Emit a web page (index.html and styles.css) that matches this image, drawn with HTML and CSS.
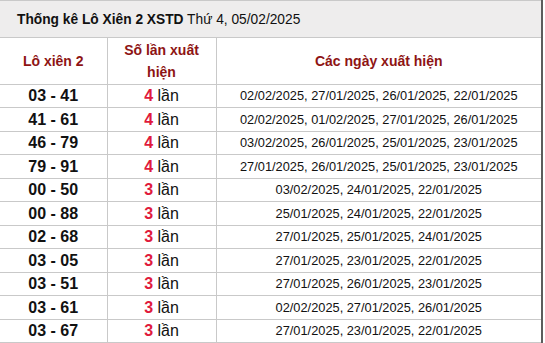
FILE: index.html
```html
<!DOCTYPE html>
<html lang="vi">
<head>
<meta charset="utf-8">
<title>Thống kê Lô Xiên 2 XSTD</title>
<link rel="stylesheet" href="styles.css">
</head>
<body>
<table class="stats">
  <colgroup>
    <col class="c1">
    <col class="c2">
    <col class="c3">
  </colgroup>
  <thead>
    <tr class="title-row">
      <th colspan="3" class="title"><b>Thống kê Lô Xiên 2 XSTD</b> Thứ 4, 05/02/2025</th>
    </tr>
    <tr class="head-row">
      <th>Lô xiên 2</th>
      <th>Số lần xuất hiện</th>
      <th>Các ngày xuất hiện</th>
    </tr>
  </thead>
  <tbody>
    <tr><td class="pair">03 - 41</td><td class="count"><b>4</b> lần</td><td class="dates">02/02/2025, 27/01/2025, 26/01/2025, 22/01/2025</td></tr>
    <tr><td class="pair">41 - 61</td><td class="count"><b>4</b> lần</td><td class="dates">02/02/2025, 01/02/2025, 27/01/2025, 26/01/2025</td></tr>
    <tr><td class="pair">46 - 79</td><td class="count"><b>4</b> lần</td><td class="dates">03/02/2025, 26/01/2025, 25/01/2025, 23/01/2025</td></tr>
    <tr><td class="pair">79 - 91</td><td class="count"><b>4</b> lần</td><td class="dates">27/01/2025, 26/01/2025, 25/01/2025, 23/01/2025</td></tr>
    <tr><td class="pair">00 - 50</td><td class="count"><b>3</b> lần</td><td class="dates">03/02/2025, 24/01/2025, 22/01/2025</td></tr>
    <tr><td class="pair">00 - 88</td><td class="count"><b>3</b> lần</td><td class="dates">25/01/2025, 24/01/2025, 22/01/2025</td></tr>
    <tr><td class="pair">02 - 68</td><td class="count"><b>3</b> lần</td><td class="dates">27/01/2025, 25/01/2025, 24/01/2025</td></tr>
    <tr><td class="pair">03 - 05</td><td class="count"><b>3</b> lần</td><td class="dates">27/01/2025, 23/01/2025, 22/01/2025</td></tr>
    <tr><td class="pair">03 - 51</td><td class="count"><b>3</b> lần</td><td class="dates">27/01/2025, 26/01/2025, 23/01/2025</td></tr>
    <tr><td class="pair">03 - 61</td><td class="count"><b>3</b> lần</td><td class="dates">02/02/2025, 27/01/2025, 26/01/2025</td></tr>
    <tr><td class="pair">03 - 67</td><td class="count"><b>3</b> lần</td><td class="dates">27/01/2025, 23/01/2025, 22/01/2025</td></tr>
  </tbody>
</table>
</body>
</html>
```
FILE: styles.css
```css
html, body {
  margin: 0;
  padding: 0;
  background: #ffffff;
}

body {
  font-family: "Liberation Sans", Arial, sans-serif;
  color: #111111;
}

.stats {
  border-collapse: collapse;
  width: 542px;
  table-layout: fixed;
  border-top: 1px solid #c8c8c8;
  border-right: 2px solid #5c5c5c;
}

.c1 { width: 107px; }
.c2 { width: 109px; }
.c3 { width: 326px; }

.stats th,
.stats td {
  border: 1px solid #c9c9c9;
  padding: 0;
  text-align: center;
}

.stats tr > :first-child {
  border-left: none;
}

.stats .title {
  background: #eeeded;
  text-align: left;
  padding: 0 0 0 17px;
  height: 36px;
  font-size: 13.75px;
  font-weight: normal;
  color: #111111;
  border-right: none;
}

.stats .title b {
  font-weight: bold;
}

.head-row th {
  height: 46px;
  font-size: 14px;
  line-height: 22px;
  font-weight: bold;
  color: #8e1414;
  padding: 0 14px;
}

.head-row th:last-child {
  border-right: none;
}

.stats tbody td {
  height: 22px;
  line-height: 20px;
}

.stats tbody tr:nth-child(even) td {
  height: 23px;
}

.stats tbody td:last-child {
  border-right: none;
}

.pair {
  font-size: 16px;
  font-weight: bold;
  color: #111111;
}

.count {
  font-size: 16px;
  color: #111111;
}

.count b {
  color: #e01a3c;
}

.dates {
  font-size: 12.8px;
  color: #111111;
}
```
